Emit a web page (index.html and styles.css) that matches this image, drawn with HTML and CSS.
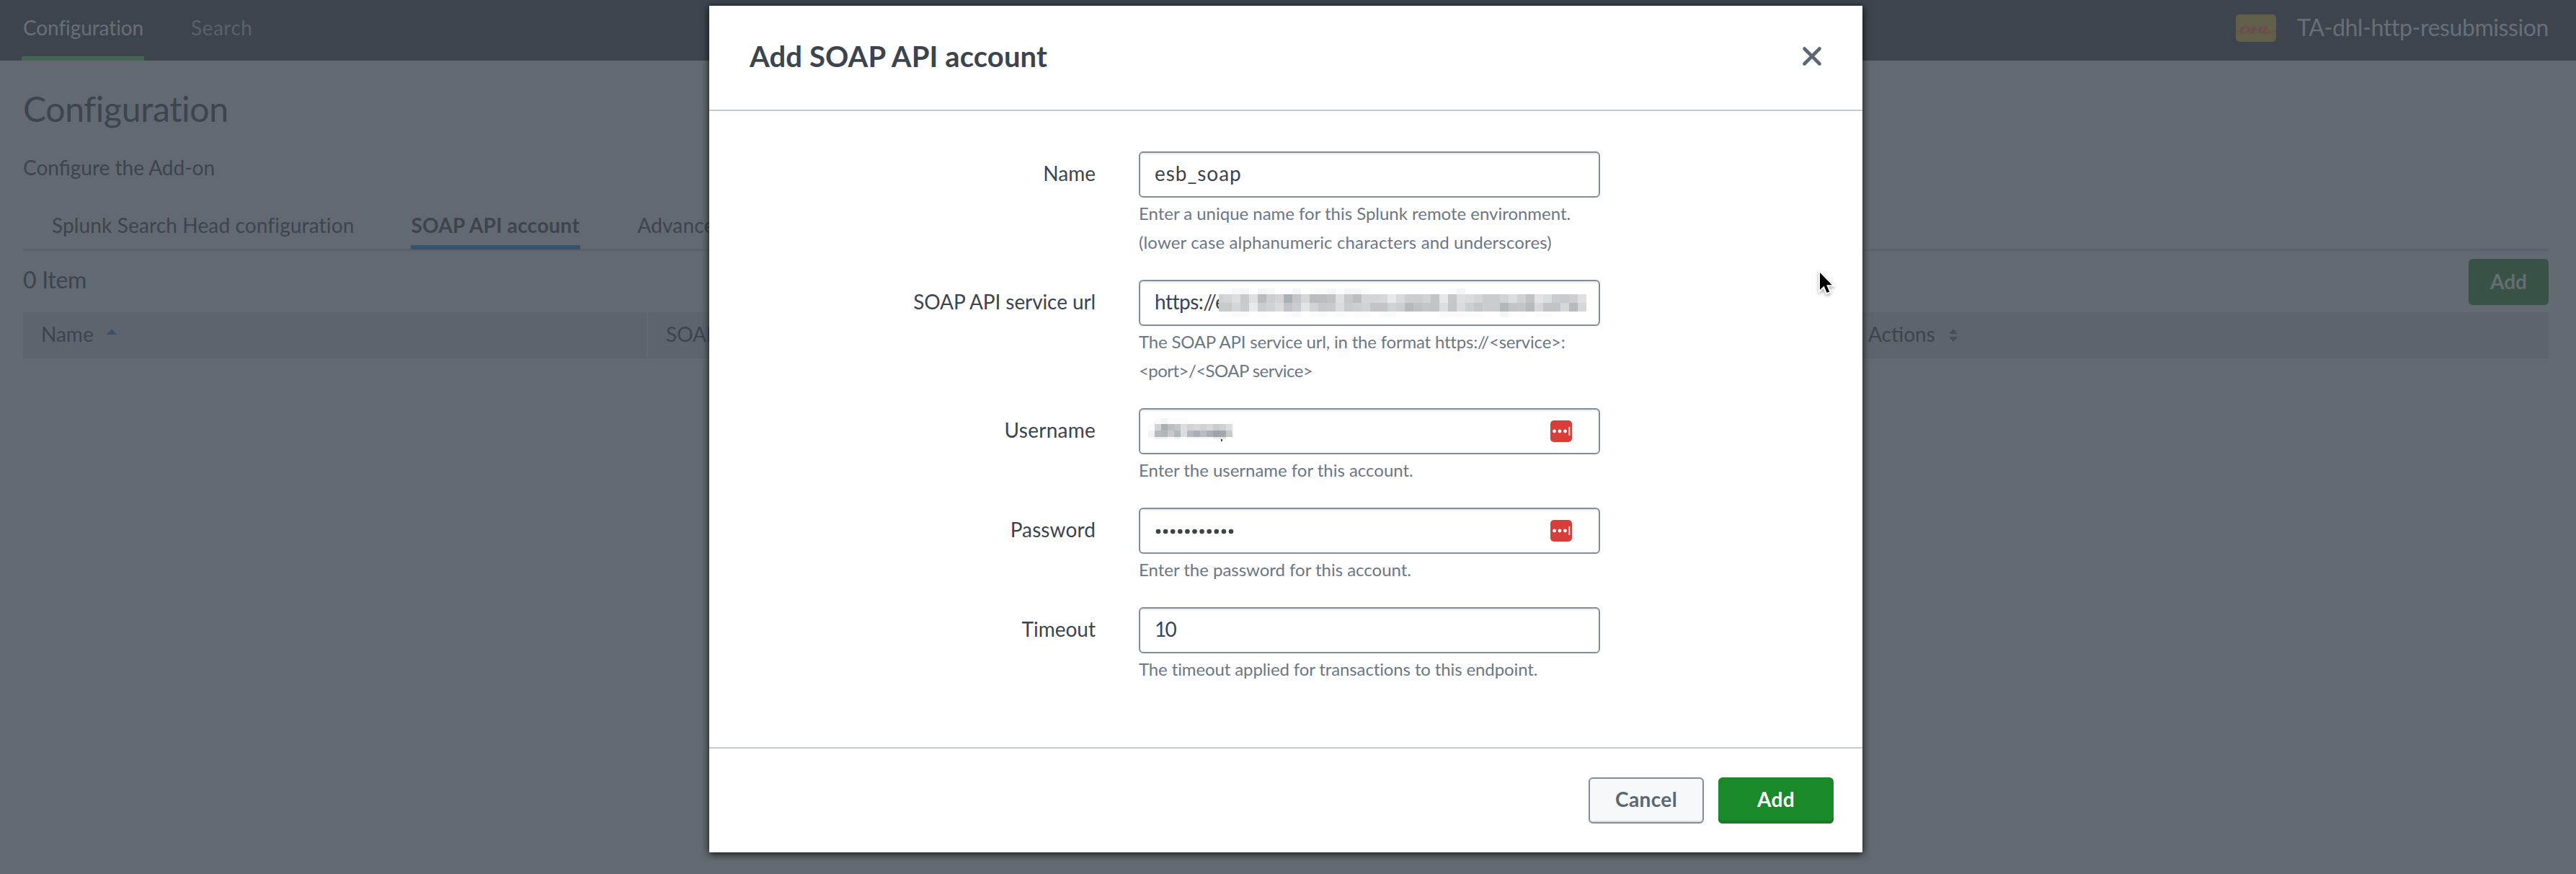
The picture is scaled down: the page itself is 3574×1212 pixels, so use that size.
FILE: index.html
```html
<!DOCTYPE html>
<html lang="en">
<head>
<meta charset="utf-8">
<title>Configuration</title>
<link rel="stylesheet" href="styles.css">
</head>
<body>
<header class="topbar">
  <nav class="nav">
    <a class="nav-item active">Configuration</a>
    <a class="nav-item search">Search</a>
  </nav>
  <div class="app">
    <svg class="app-logo" width="56" height="38" viewBox="0 0 56 38">
      <rect width="56" height="38" rx="5" fill="#615f49"/>
      <path d="M0 23.5H5M51 23.5H56" stroke="#714a4e" stroke-width="1"/>
      <text class="logo-text" x="5" y="26" textLength="45" lengthAdjust="spacingAndGlyphs">DHL</text>
    </svg>
    <span class="app-name">TA-dhl-http-resubmission</span>
  </div>
</header>

<main class="page">
  <h1 class="page-title">Configuration</h1>
  <p class="page-desc">Configure the Add-on</p>
  <div class="tabs">
    <a class="tab">Splunk Search Head configuration</a>
    <a class="tab selected">SOAP API account</a>
    <a class="tab">Advanced</a>
  </div>
  <div class="toolbar">
    <span class="count">0 Item</span>
    <button class="btn-page-add">Add</button>
  </div>
  <div class="table-head">
    <div class="th">Name
      <svg width="14" height="20" viewBox="0 0 14 20"><path d="M0 8L7 0L14 8Z" fill="#37526c"/></svg>
    </div>
    <div class="th">SOAP API service url</div>
    <div class="th">Actions
      <svg width="14" height="20" viewBox="0 0 14 20"><path d="M1 7L7 0L13 7ZM1 11H13L7 18Z" fill="#484f5a"/></svg>
    </div>
  </div>
</main>

<section class="modal">
  <header class="modal-head">
    <h2 class="modal-title">Add SOAP API account</h2>
    <svg class="close" width="28" height="28" viewBox="0 0 28 28"><path d="M3.5 3.5L24.5 24.5M24.5 3.5L3.5 24.5" stroke="#5c6773" stroke-width="4.6" stroke-linecap="round"/></svg>
  </header>
  <div class="modal-body">
    <div class="field">
      <label class="label">Name</label>
      <div class="control">
        <div class="input"><span class="value-name">esb_soap</span></div>
        <p class="help">Enter a unique name for this Splunk remote environment.<br><span class="help-loose">(lower case alphanumeric characters and underscores)</span></p>
      </div>
    </div>
    <div class="field">
      <label class="label label-url">SOAP API service url</label>
      <div class="control">
        <div class="input"><span class="value-url">https://e</span><svg class="mosaic-url" id="mosaic-url" width="520" height="40" viewBox="0 0 520 40" shape-rendering="crispEdges"></svg></div>
        <p class="help"><span class="help-tight">The SOAP API service url, in the format https://&lt;service&gt;:</span><br><span class="help-tighter">&lt;port&gt;/&lt;SOAP service&gt;</span></p>
      </div>
    </div>
    <div class="field">
      <label class="label label-user">Username</label>
      <div class="control">
        <div class="input">
          <svg class="mosaic-user" id="mosaic-user" width="130" height="32" viewBox="0 0 130 32" shape-rendering="crispEdges"></svg>
          <svg class="pm-icon" width="30" height="34" viewBox="0 0 30 34"><rect y="2" width="30" height="30" rx="5" fill="#d73e39"/><g fill="#fff"><circle cx="5.5" cy="17" r="2.4"/><circle cx="13" cy="17" r="2.4"/><circle cx="20.5" cy="17" r="2.4"/><rect x="25.5" y="11" width="1.8" height="12"/></g></svg>
        </div>
        <p class="help">Enter the username for this account.</p>
      </div>
    </div>
    <div class="field">
      <label class="label label-pass">Password</label>
      <div class="control">
        <div class="input">
          <svg class="dots" width="110" height="10" viewBox="0 0 110 10"><path d="M5 5H107" stroke="#3c444d" stroke-width="6.6" stroke-linecap="round" stroke-dasharray="0 10.1"/></svg>
          <svg class="pm-icon" width="30" height="34" viewBox="0 0 30 34"><rect y="2" width="30" height="30" rx="5" fill="#d73e39"/><g fill="#fff"><circle cx="5.5" cy="17" r="2.4"/><circle cx="13" cy="17" r="2.4"/><circle cx="20.5" cy="17" r="2.4"/><rect x="25.5" y="11" width="1.8" height="12"/></g></svg>
        </div>
        <p class="help">Enter the password for this account.</p>
      </div>
    </div>
    <div class="field">
      <label class="label">Timeout</label>
      <div class="control">
        <div class="input"><span class="value-num">10</span></div>
        <p class="help help-timeout">The timeout applied for transactions to this endpoint.</p>
      </div>
    </div>
  </div>
  <footer class="modal-foot">
    <button class="btn cancel">Cancel</button>
    <button class="btn primary">Add</button>
  </footer>
</section>

<svg class="cursor" width="40" height="48" viewBox="-6 -6 40 48"><path d="M0 0V24L5.6 18.6L9.6 28L13.2 26.4L9.2 17.2H16.8Z" fill="#000" stroke="#fff" stroke-width="4" paint-order="stroke"/></svg>
<script src="mosaic.js"></script>
</body>
</html>
```
FILE: styles.css
```css
* { box-sizing: border-box; }
body {
  margin: 0;
  height: 1212px;
  overflow: hidden;
  background: #636970;
  color: #3d444d;
  font: 28px/40px Lato, sans-serif;
  white-space: nowrap;
}
h1, h2, p { margin: 0; font-weight: 400; }
button { border: 0; font: inherit; font-weight: 700; }
svg { display: block; flex: none; }

/* Top bar */
.topbar {
  display: flex;
  justify-content: space-between;
  height: 84px;
  padding: 0 38px 0 30px;
  background: #3d444d;
}
.nav { display: flex; gap: 63px; }
.nav-item {
  height: 84px;
  padding: 0 2px;
  border-bottom: 6px solid transparent;
  line-height: 76px;
  color: #5a616a;
}
.nav-item.active { width: 170px; border-color: #446552; color: #686f77; letter-spacing: -.1px; }
.nav-item.search { letter-spacing: .5px; }
.app { display: flex; gap: 29px; padding-top: 20px; }
.logo-text { font: italic 700 12.5px "Liberation Sans", sans-serif; fill: #714a4e; stroke: #714a4e; stroke-width: .6px; }
.app-name {
  height: 34px;
  font-size: 32px;
  line-height: 36px;
  letter-spacing: -.4px;
  color: #686f77;
}

/* Page behind the dialog */
.page { padding: 37px 38px 0 32px; }
.page-title { font-size: 48px; line-height: 60px; letter-spacing: -.3px; }
.page-desc { margin-top: 31px; }
.tabs {
  display: flex;
  gap: 79px;
  height: 56px;
  margin-top: 40px;
  padding-left: 40px;
  border-bottom: 2px solid #5a6069;
  box-shadow: inset 0 -2px #60666e;
}
.tab { height: 54px; letter-spacing: .14px; }
.tab.selected {
  width: 235px;
  border-bottom: 6px solid #37526c;
  font-weight: 700;
  letter-spacing: .25px;
}
.toolbar {
  display: flex;
  justify-content: space-between;
  height: 85px;
  padding-top: 11px;
}
.count { font-size: 32px; line-height: 57px; letter-spacing: -.3px; }
.btn-page-add {
  width: 111px;
  height: 64px;
  padding: 0 0 2px;
  border-radius: 6px;
  background: #385346;
  color: #656c72;
}
.table-head { display: grid; grid-template-columns: 865px 1666px 1fr; gap: 2px; }
.th {
  display: flex;
  gap: 18px;
  height: 64px;
  padding-left: 25px;
  background: #5d646d;
  line-height: 60px;
}
.th svg { margin-top: 23px; }

/* Dialog */
.modal {
  position: absolute;
  left: 984px;
  top: 8px;
  width: 1600px;
  height: 1174px;
  background: #fff;
  color: #3c444d;
  box-shadow: 0 2px 10px rgba(0, 0, 0, .85);
}
.modal-head {
  display: flex;
  justify-content: space-between;
  height: 146px;
  padding: 0 56px;
  border-bottom: 2px solid #c3cbd4;
}
.modal-title { font-size: 40px; font-weight: 700; line-height: 140px; letter-spacing: .12px; }
.close { margin-top: 56px; }
.modal-body { height: 882px; padding-top: 56px; }
.field {
  display: grid;
  grid-template-columns: 536px 640px;
  gap: 60px;
  margin-bottom: 32px;
}
.label { line-height: 60px; text-align: right; }
.label-user { letter-spacing: .25px; }
.label-pass { letter-spacing: .1px; }
.label-url { letter-spacing: -.1px; }
.input {
  display: flex;
  height: 64px;
  padding-left: 20px;
  border: 2px solid #818d99;
  border-radius: 6px;
  box-shadow: inset 0 2px 2px #e9ebed;
  line-height: 56px;
}
.value-name { letter-spacing: .95px; }
.value-url { width: 89px; letter-spacing: -.5px; }
.value-num { letter-spacing: -1.7px; }
.mosaic-url { position: relative; margin-top: 10px; }
.mosaic-user { margin-top: 12px; margin-left: -9px; }
.dots { margin-top: 26px; }
.pm-icon { margin: 13px 37px 0 auto; }
.help { margin-top: 2px; font-size: 24px; line-height: 40px; letter-spacing: -.02px; color: #6b7785; }
.help-loose { letter-spacing: .14px; }
.help-tight { letter-spacing: -.2px; }
.help-tighter { letter-spacing: -.55px; }
.help-timeout { letter-spacing: -.12px; }
.modal-foot {
  display: flex;
  justify-content: flex-end;
  gap: 20px;
  height: 146px;
  padding: 40px 40px 0;
  border-top: 2px solid #c3cbd4;
}
.btn { width: 160px; height: 64px; padding: 0 0 4px; border-radius: 6px; letter-spacing: .4px; }
.cancel {
  border: 2px solid #818d99;
  background: #f7f8fa;
  box-shadow: inset 0 -2px #dcdfe2;
  color: #5c6773;
}
.primary { background: #1a8929; box-shadow: inset 0 -4px #187b25; color: #fff; }

/* Mouse pointer */
.cursor {
  position: absolute;
  left: 2519px;
  top: 372px;
  filter: drop-shadow(0 2px 2px rgba(0, 0, 0, .35));
}
```
FILE: mosaic.js
```js
// Draws the pixelated masks over private values: each row is a run of equal-width cells.
function drawRow(svg, x, y, w, h, colors) {
  colors.split(" ").forEach(function (c, i) {
    if (c === "-") return;
    var r = document.createElementNS("http://www.w3.org/2000/svg", "rect");
    r.setAttribute("x", x + i * w);
    r.setAttribute("y", y);
    r.setAttribute("width", w);
    r.setAttribute("height", h);
    r.setAttribute("fill", "#" + c);
    svg.appendChild(r);
  });
}

var url = document.getElementById("mosaic-url");
drawRow(url, 0, 0, 520, 40, "fefefe");
drawRow(url, 6, 0, 12, 8, "fbfbfc f7f8f8 f7f7f8 - f5f6f6 f8f8f9 - fbfcfc f5f6f6 - fafcfb fafcfb f5f7f6 fbfcfc f6f6f7 f6f7f7 fafafa - - - - - - - - - fafbfb f4f6f5 - - - - - - - - - - - - - -");
drawRow(url, 0, 8, 6, 12, "d0d1d3");
drawRow(url, 0, 20, 6, 12, "c8c9cb");
drawRow(url, 6, 8, 12, 12, "d4d5d7 dedee0 c9cacc dfe0e2 b9bdc1 cdced1 d3d4d7 abafb6 c3c5c8 d6d7da b9bdbf b9bdc0 c0c2c6 dfdfe2 c7c8ca bdbec2 d4d5d6 d5d6d8 d7d8da e8eae9 d9dadc cdced0 cccdd0 d1d2d6 c2c5c8 e7e8ea c6c7c9 dfdfe1 dbdcde d5d6d7 cbccd0 cccccf d2d3d7 dddde0 d0d1d4 c1c2c5 e3e3e5 dbdcdf cbccd0 cacacd cfcfd1 e0e0e3");
drawRow(url, 6, 20, 12, 12, "c9cacd d5d6d8 cacbcd e9eaec cbcccf d0d1d3 dadbdd c0c3c7 cbccce e3e4e6 d2d3d6 c6c8cc c6cacd dbdcdf c9cacd cecfd1 d2d3d5 c3c4c8 c2c4c8 d1d2d4 cdced0 b7b9bb bfc1c5 c4c5c9 c1c4c8 dddddf c5c6c8 dbdbdd cdced0 c4c6ca cbccce cbcccd b2b7bb c3c4c8 c4c5c9 b6babe d7d7d9 c3c4c8 c2c4ca d6d7d9 b7bbbe d7d7d9");
drawRow(url, 6, 32, 12, 8, "fdfdfd f9fafa fbfbfc - fcfdfd - - fdfdfd f9f9fa - fbfdfc fafcfb fcfdfd fafcfb - fcfcfd fcfcfd - fafcfb fafcfb - - - - - fbfbfc fbfbfc fbfbfc fcfcfd fcfcfd - - f6f6f7 fcfcfd fdfdfd - fcfcfd fcfcfd - - - -");

var user = document.getElementById("mosaic-user");
drawRow(user, 9, 0, 9, 8, "fcfcfc f4f5f5 fcfcfc fcfcfc fcfcfc");
drawRow(user, 0, 8, 9, 9, "fafafa d1d3d6 abaeb5 babec1 c3c7cb dcdde0 d1d2d5 d8d9db d0d1d4 d8d8db c9cbcf cfd0d3 dddde0");
drawRow(user, 0, 17, 9, 9, "f3f3f4 b6b9bd b2b7ba c6cace b3b8bb dedee1 b5b9be abaeb5 babcc0 abafb5 a0a2a9 a4a7ad c8c9cb");
drawRow(user, 9, 26, 9, 3, "f3f3f4 f3f3f4 fafafa f3f3f4 - f7f7f8 f7f7f8 f7f7f8 f9f9fa ececee e6e6e8");
drawRow(user, 101, 29, 2, 3, "3c444d");
```
